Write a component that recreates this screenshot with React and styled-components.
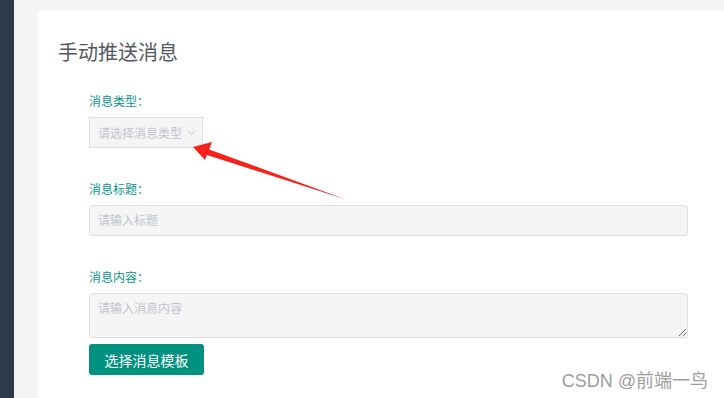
import React from 'react'
import styled, { createGlobalStyle } from 'styled-components'

const GlobalStyle = createGlobalStyle`
	html, body {
		margin: 0;
		padding: 0;
		height: 100%;
		overflow: hidden;
	}
	body {
		font-family: 'Liberation Sans', 'Noto Sans CJK SC', sans-serif;
	}
`

const fields = [
	{ label: '消息标题：', placeholder: '请输入标题' },
]

const App = () => {
	return (
		<>
			<GlobalStyle />
			<Page>
				<Sidebar />
				<Main>
					<Card>
						<Title>手动推送消息</Title>
						<Form>
							<Field>
								<Label>消息类型：</Label>
								<Select>
									<span>请选择消息类型</span>
									<svg width="9" height="6" viewBox="0 0 9 6">
										<path d="M1 1l3.5 3.5L8 1" fill="none" stroke="#c8c9cc" strokeWidth="1" />
									</svg>
								</Select>
							</Field>
							{fields.map((f) => (
								<Field key={f.label}>
									<Label>{f.label}</Label>
									<Input placeholder={f.placeholder} />
								</Field>
							))}
							<Field $last>
								<Label>消息内容：</Label>
								<TextArea placeholder="请输入消息内容" />
							</Field>
							<Button>选择消息模板</Button>
						</Form>
					</Card>
				</Main>
				<Arrow width="724" height="398" viewBox="0 0 724 398">
					<polygon
						points="193,147 212,142 209.2,149.4 346,199.5 207,155 205,160"
						fill="#f5221b"
					/>
				</Arrow>
				<Watermark>CSDN @前端一鸟</Watermark>
			</Page>
		</>
	)
}

export default App

const Page = styled.div`
	position: relative;
	display: flex;
	width: 100%;
	height: 100vh;
	overflow: hidden;
`

const Sidebar = styled.aside`
	width: 14px;
	flex-shrink: 0;
	background-color: #2e3a4a;
`

const Main = styled.main`
	flex: 1;
	display: flex;
	padding: 11px 0 0 24px;
	background-color: #f4f4f5;
`

const Card = styled.section`
	flex: 1;
	background-color: #ffffff;
	padding: 28px 36px 0 20px;
`

const Title = styled.h2`
	margin: 0;
	font-size: 20px;
	font-weight: normal;
	line-height: 28px;
	color: #55585f;
`

const Form = styled.div`
	display: flex;
	flex-direction: column;
	align-items: flex-start;
	margin: 27px 0 0 31px;
`

const Field = styled.div`
	display: flex;
	flex-direction: column;
	align-items: flex-start;
	width: 100%;
	margin-bottom: ${(p) => (p.$last ? '6px' : '34px')};
`

const Label = styled.label`
	font-size: 12px;
	line-height: 16px;
	color: #0b9488;
	margin-bottom: 7px;
`

const Select = styled.div`
	box-sizing: border-box;
	display: flex;
	align-items: center;
	gap: 5px;
	width: 114px;
	height: 31px;
	padding: 0 8px;
	border: 1px solid #dcdfe2;
	background-color: #f5f5f5;
	font-size: 12px;
	color: #c0c4cc;
	white-space: nowrap;

	span {
		flex-shrink: 0;
	}

	svg {
		flex-shrink: 0;
		margin-top: 1px;
	}
`

const controlStyle = `
	box-sizing: border-box;
	width: 100%;
	border: 1px solid #dcdfe2;
	border-radius: 3px;
	background-color: #f5f5f5;
	font-family: 'Liberation Sans', 'Noto Sans CJK SC', sans-serif;
	font-size: 12px;
	color: #606266;
	outline: none;

	&::placeholder {
		color: #c0c4cc;
	}
`

const Input = styled.input`
	${controlStyle}
	height: 31px;
	padding: 0 8px;
`

const TextArea = styled.textarea`
	${controlStyle}
	display: block;
	height: 45px;
	padding: 7px 8px;
	line-height: 16px;
	resize: vertical;
`

const Button = styled.button`
	box-sizing: border-box;
	width: 115px;
	height: 31px;
	border: none;
	border-radius: 3px;
	background-color: #009180;
	color: #ffffff;
	font-family: 'Liberation Sans', 'Noto Sans CJK SC', sans-serif;
	font-size: 14px;
	cursor: pointer;
`

const Arrow = styled.svg`
	position: absolute;
	left: 0;
	top: 0;
	pointer-events: none;
`

const Watermark = styled.div`
	position: absolute;
	right: 16px;
	bottom: 6px;
	font-family: 'Liberation Sans', 'Noto Sans CJK SC', sans-serif;
	font-size: 18px;
	color: #9d9d9d;
	pointer-events: none;
`
